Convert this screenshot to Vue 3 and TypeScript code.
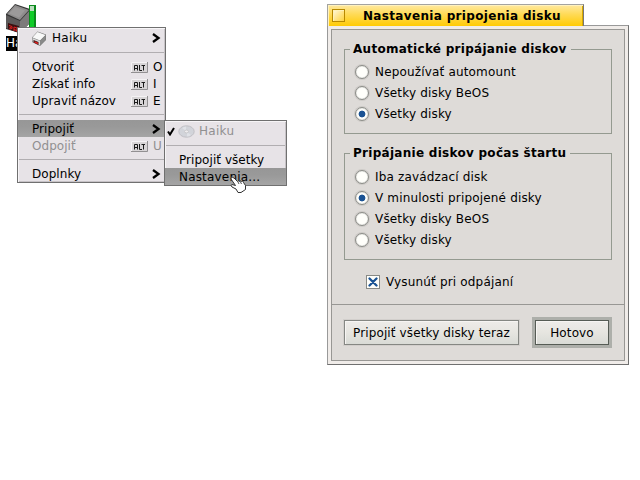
<script setup lang="ts">
import { ref } from 'vue'

interface RadioGroup {
  title: string
  options: string[]
  selected: number
}

const groups = ref<RadioGroup[]>([
  {
    title: 'Automatické pripájanie diskov',
    options: ['Nepoužívať automount', 'Všetky disky BeOS', 'Všetky disky'],
    selected: 2,
  },
  {
    title: 'Pripájanie diskov počas štartu',
    options: ['Iba zavádzací disk', 'V minulosti pripojené disky', 'Všetky disky BeOS', 'Všetky disky'],
    selected: 1,
  },
])
const eject = ref(true)

interface MenuItem {
  label?: string
  key?: string
  sub?: boolean
  icon?: boolean
  active?: boolean
  disabled?: boolean
}

const menu: MenuItem[] = [
  { label: 'Haiku', sub: true, icon: true },
  {},
  { label: 'Otvoriť', key: 'O' },
  { label: 'Získať info', key: 'I' },
  { label: 'Upraviť názov', key: 'E' },
  {},
  { label: 'Pripojiť', sub: true, active: true },
  { label: 'Odpojiť', key: 'U', disabled: true },
  {},
  { label: 'Doplnky', sub: true },
]
</script>

<template>
  <main class="desktop">
    <div class="volume">
      <svg class="drive" width="32" height="32" viewBox="0 0 32 32">
        <path d="M0 10 9 0l15 5v14L14 29 0 25z" fill="#333" />
        <path d="M1 10 9 1l14 5-9 10z" fill="#8e8c8c" />
        <path d="M3 9.500 9 3l10 3.500-6 7z" fill="#9c9a9a" />
        <path d="M0 11l14 6v12L0 24z" fill="#5c5a5a" />
        <path d="M14 17 24 6v13L14 29z" fill="#7d7b7b" />
        <path d="M2 19l11 3v7L2 25z" fill="#3c1010" />
        <path d="M3 21.500l3 1v2l-2-1v2M8 27v-4l3 1v4M8 25.500l3 1" stroke="#dc2020" fill="none" />
        <path d="M23 1h7v31h-7z" fill="#0b8a1c" />
        <path d="M24 2h4v5h-4z" fill="#b9dcbc" />
        <path d="M24 7h4v25h-4z" fill="#10cc28" />
      </svg>
      <span class="volume-name">Haiku</span>
    </div>

    <nav class="menu main-menu">
      <template v-for="(item, i) in menu" :key="i">
        <div v-if="!item.label" class="separator"></div>
        <div v-else class="item" :class="{ active: item.active, disabled: item.disabled, tall: item.icon }">
          <svg v-if="item.icon" class="small-drive" width="17" height="16" viewBox="0 0 17 16">
            <path d="M1 6.500 6.500.5 15 3.500V9l-6 6-8-4z" fill="#777" />
            <path d="M1.500 6.500 6.500 1 14.500 4 9 9.500z" fill="#f8f8f8" />
            <path d="M1.500 7l7.500 3v4.500l-7.500-4z" fill="#d8d8d8" />
            <path d="M9 10l5.500-5.500V9L9 14.500z" fill="#8a8a8a" />
            <path d="M2.500 9l5 2v3l-5-2.500z" fill="#331818" />
            <path d="M3.500 10.800l3.500 1.700" stroke="#e02222" stroke-width="1.500" />
          </svg>
          <span class="label">{{ item.label }}</span>
          <template v-if="item.key">
            <svg class="alt" width="17" height="11" viewBox="0 0 17 11">
              <path d="M0 0h17v11H0z" fill="#d8d5d7" />
              <path d="M0 10.500h16.500V0" fill="none" stroke="#929092" />
              <path d="M.5 10V.5H16" fill="none" stroke="#f4f2f4" />
              <path d="M3.500 8.500v-5h3v5M3 6.500h4M8.500 3v5.500H11M10.500 3.500H14M12.500 3.500v5" fill="none" stroke="#1a1a1a" />
            </svg>
            <span class="key">{{ item.key }}</span>
          </template>
          <svg v-if="item.sub" class="arrow" width="9" height="10" viewBox="0 0 9 10">
            <path d="M1 1l5.500 4L1 9" fill="none" stroke="#000" stroke-width="2.300" />
          </svg>
        </div>
      </template>
    </nav>

    <nav class="menu sub-menu">
      <div class="item disabled tall">
        <svg class="check" width="8" height="9" viewBox="0 0 8 9">
          <path d="M1 4.500l2 3L7 1" fill="none" stroke="#000" stroke-width="2" />
        </svg>
        <svg class="disc" width="17" height="13" viewBox="0 0 17 13">
          <ellipse cx="8.500" cy="6.500" rx="7.700" ry="5.700" fill="#d2d4da" stroke="#c0bfc4" />
          <path d="M8 6L4 3Q6 1.500 8 1.500zM9 7l4 3q-2 1.500-4 1.500z" fill="#e0e2e7" />
          <ellipse cx="8.500" cy="6.500" rx="2" ry="1.400" fill="#eeecef" stroke="#bbb" stroke-width=".6" />
        </svg>
        <span class="label">Haiku</span>
      </div>
      <div class="separator"></div>
      <div class="item"><span class="label">Pripojiť všetky</span></div>
      <div class="item active"><span class="label dots">Nastavenia...</span></div>
    </nav>

    <svg class="pointer" width="17" height="17" viewBox="0 0 17 17">
      <path
        d="M1 2Q2 .5 4 2l3.500 3.500q1-1.500 2 0 1-1.500 2 0 1.500-1.500 2 1l2 3v4l-4.500 3H8L6 13l-4-2Q0 9 2 8.500l3.500 1L1 3z"
        fill="#fff" stroke="#333"
      />
      <path d="M7.500 5l1.500 3M10 5l1.500 3" stroke="#555" />
    </svg>

    <section class="window">
      <header class="tab">
        <span class="close"></span>
        <h1>Nastavenia pripojenia disku</h1>
      </header>
      <div class="frame">
        <div class="content">
          <fieldset v-for="(group, g) in groups" :key="g" class="group">
            <legend>{{ group.title }}</legend>
            <div v-for="(option, o) in group.options" :key="o" class="option" @click="group.selected = o">
              <span class="radio" :class="{ on: group.selected === o }"></span>
              <span class="caption">{{ option }}</span>
            </div>
          </fieldset>
          <div class="eject" @click="eject = !eject">
            <span class="box">
              <svg v-if="eject" width="10" height="10" viewBox="0 0 10 10">
                <path d="M1.500 1.500l7 7M8.500 1.500l-7 7" stroke="#1b5394" stroke-width="2.300" stroke-linecap="round" />
              </svg>
            </span>
            <span class="caption">Vysunúť pri odpájaní</span>
          </div>
          <footer class="actions">
            <button class="button">Pripojiť všetky disky teraz</button>
            <div class="default"><button class="button">Hotovo</button></div>
          </footer>
        </div>
      </div>
    </section>
  </main>
</template>

<style>
body {
  margin: 0;
  background: #fff;
}
</style>

<style scoped>
* {
  box-sizing: border-box;
}
.desktop {
  position: relative;
  width: 640px;
  height: 480px;
  overflow: hidden;
  background: #fff;
  color: #000;
  font: 12px/17px "DejaVu Sans", sans-serif;
  white-space: nowrap;
  cursor: default;
}
.volume {
  position: absolute;
  left: 6px;
  top: 4px;
}
.drive {
  display: block;
}
.volume-name {
  display: block;
  height: 15px;
  line-height: 15px;
  background: #000;
  color: #fff;
}
.menu {
  position: absolute;
  background: #e7e3e7;
  border: 1px solid #707070;
  box-shadow: inset 1px 1px #f7f5f7, inset -1px -1px #c7c3c7;
}
.main-menu {
  left: 17px;
  top: 27px;
  width: 149px;
  height: 156px;
}
.sub-menu {
  left: 164px;
  top: 120px;
  width: 123px;
  height: 66px;
}
.item {
  display: flex;
  align-items: center;
  height: 17px;
  padding: 0 4px 0 14px;
}
.item.tall {
  height: 19px;
}
.item.active {
  background: linear-gradient(#979797, #999 40%, #a5a5a5);
}
.item.disabled {
  color: #919091;
}
.label {
  flex: 1;
  padding-top: 1px;
  letter-spacing: 0.05px;
}
.tall .label {
  letter-spacing: 0.3px;
}
.dots {
  letter-spacing: 0.18px;
}
.separator {
  height: 11px;
  margin: 0 1px;
  background: linear-gradient(#b1aeb1, #b1aeb1) 0 5px / 100% 1px no-repeat;
}
.small-drive {
  margin: 2px 4px 0 -1px;
}
.alt {
  margin-top: 1px;
}
.key {
  width: 8px;
  margin-left: 5px;
  padding-top: 1px;
}
.sub-menu .tall {
  padding-left: 2px;
}
.check {
  margin-top: 2px;
}
.disc {
  margin: 1px 4px 0 3px;
}
.pointer {
  position: absolute;
  left: 230px;
  top: 176px;
}
.window {
  position: absolute;
  left: 327px;
  top: 4px;
  width: 302px;
}
.tab {
  position: relative;
  display: flex;
  align-items: center;
  width: 257px;
  height: 22px;
  padding-left: 4px;
  border: 1px solid #a3a3a0;
  border-right-color: #777;
  border-bottom: 0;
  background: linear-gradient(#ffe9a0, #ffda55 45%, #ffcb05);
  box-shadow: inset 1px 1px #fff2c0, inset -1px 0 #d8a900;
}
.close {
  width: 13px;
  height: 13px;
  border: 1px solid #b88900;
  background: linear-gradient(135deg, #fff8df, #ffd33a);
  box-shadow: inset 1px 1px #fff2b8;
}
h1 {
  margin: 0 0 0 18px;
  padding-top: 1px;
  font-size: 12px;
  font-weight: bold;
  letter-spacing: 0.33px;
}
.frame {
  height: 340px;
  margin-top: -1px;
  padding: 3px;
  border: 1px solid #999;
  border-right-color: #707070;
  border-bottom-color: #707070;
  background: #f0ece9;
}
.content {
  display: flex;
  flex-direction: column;
  height: 332px;
  border: 1px solid #989794;
  background: #dedbd8;
}
.group {
  height: 92px;
  margin: 12px 12px 0;
  padding: 5px 10px 0;
  border: 1px solid #949a90;
  min-width: 0;
}
.group + .group {
  height: 114px;
  margin-top: 12px;
  padding-top: 6px;
}
legend {
  height: 14px;
  margin-left: -5px;
  padding: 0 4px 0 3px;
  line-height: 14px;
  font-weight: bold;
  letter-spacing: 0.28px;
}
.option {
  display: flex;
  align-items: center;
  height: 21px;
  gap: 6px;
}
.caption {
  padding-top: 1px;
  letter-spacing: 0.17px;
}
.radio {
  width: 14px;
  height: 14px;
  border: 1px solid #8c8d88;
  border-radius: 50%;
  background: #fffffb;
  box-shadow: 0 0 0 1px #cdcac7, inset 0 0 1px #999;
}
.radio.on {
  background: radial-gradient(circle, #1b5394 0 2.900px, #fffffb 3.800px);
}
.eject {
  display: flex;
  align-items: center;
  height: 20px;
  margin: 12px 0 0 34px;
  gap: 6px;
}
.box {
  display: flex;
  align-items: center;
  justify-content: center;
  width: 14px;
  height: 14px;
  border: 1px solid #888985;
  background: #fffffb;
}
.actions {
  display: flex;
  align-items: flex-start;
  justify-content: space-between;
  height: 56px;
  margin-top: auto;
  padding: 12px 12px 0;
  border-top: 1px solid #989794;
}
.button {
  height: 25px;
  width: 175px;
  margin-top: 3px;
  padding: 1px 0 0;
  border: 1px solid #858783;
  background: linear-gradient(#eeece9, #e6e5e0 50%, #d9dbd6);
  box-shadow: inset 1px 1px #f7f5f3, 0 0 0 1px #d2cfcc;
  color: #000;
  font: 12px/17px "DejaVu Sans", sans-serif;
  letter-spacing: 0.12px;
}
.default {
  width: 80px;
  height: 31px;
  padding: 3px;
  background: #adafaa;
}
.default .button {
  width: 74px;
  margin: 0;
  border-color: #565c55;
  box-shadow: inset 1px 1px #f7f5f3;
}
</style>
